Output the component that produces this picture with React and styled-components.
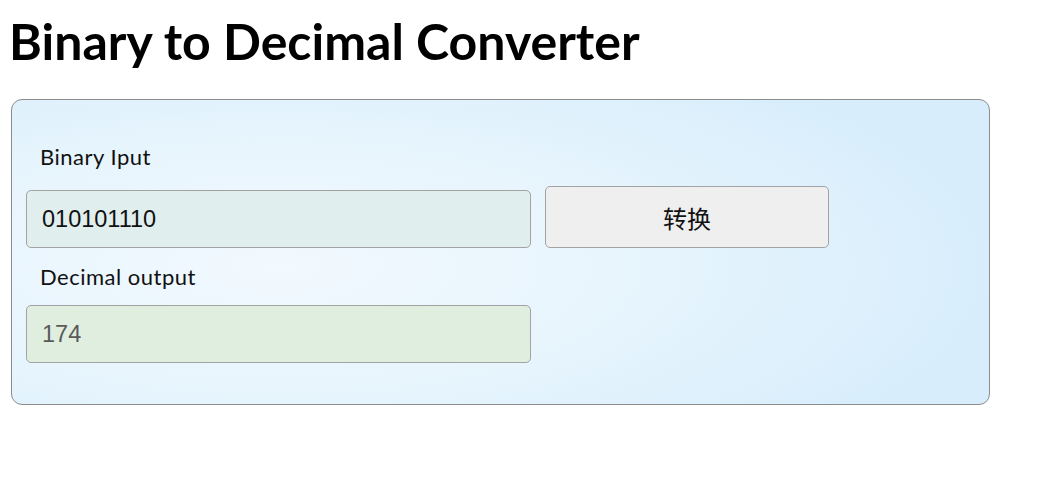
import React from "react";
import styled, { createGlobalStyle } from "styled-components";

const GlobalStyle = createGlobalStyle`
  html, body {
    margin: 0;
    padding: 0;
    background: #ffffff;
  }
  body {
    margin: 8px;
    font-family: "Lato", "Noto Sans", sans-serif;
    color: #000;
  }
`;

const Title = styled.h1`
  margin: 4px 0 29px 1px;
  font-family: "Lato", "Noto Sans", sans-serif;
  font-weight: 700;
  font-size: 50px;
  line-height: 58px;
  color: #000;
`;

const Panel = styled.div`
  box-sizing: border-box;
  width: 979px;
  margin-left: 3px;
  padding: 44px 14px 41px 14px;
  border: 1px solid #8c8c8c;
  border-radius: 11px;
  background: radial-gradient(
    ellipse 75% 85% at 27% 55%,
    #f2f9ff 0%,
    #e8f5fd 45%,
    #d7edfb 100%
  );
  display: flex;
  flex-direction: column;
`;

const Label = styled.label`
  display: block;
  margin: 0 0 ${(p) => p.$gap}px 14px;
  font-family: "Lato", "Noto Sans", sans-serif;
  font-size: 22px;
  letter-spacing: 0.5px;
  line-height: 26px;
  color: #111;
`;

const Row = styled.div`
  display: flex;
  align-items: flex-end;
  gap: 14px;
  margin-bottom: ${(p) => p.$gap || 0}px;
`;

const Field = styled.input`
  box-sizing: border-box;
  width: 505px;
  height: 58px;
  padding: 0 15px;
  border: 1px solid #a3a3a3;
  border-radius: 5px;
  background: ${(p) => p.$bg};
  font-family: "Liberation Sans", Arial, sans-serif;
  font-size: 23.5px;
  color: ${(p) => p.$color};
  outline: none;
  -webkit-text-fill-color: ${(p) => p.$color};
  opacity: 1;
`;

const ConvertButton = styled.button`
  box-sizing: border-box;
  width: 284px;
  height: 62px;
  border: 1px solid #a3a3a3;
  border-radius: 5px;
  background: #efefef;
  font-family: "Noto Sans CJK SC", "Noto Sans", sans-serif;
  font-size: 24px;
  color: #111;
  cursor: pointer;
  padding: 0;
`;

export default function App() {
  return (
    <>
      <GlobalStyle />
      <Title>Binary to Decimal Converter</Title>
      <Panel>
        <Label $gap={16}>Binary Iput</Label>
        <Row $gap={16}>
          <Field
            $bg="#e0eeee"
            $color="#111"
            defaultValue="010101110"
          />
          <ConvertButton>转换</ConvertButton>
        </Row>
        <Label $gap={15}>Decimal output</Label>
        <Row>
          <Field $bg="#e0eee0" $color="#5a5a5a" value="174" readOnly />
        </Row>
      </Panel>
    </>
  );
}
